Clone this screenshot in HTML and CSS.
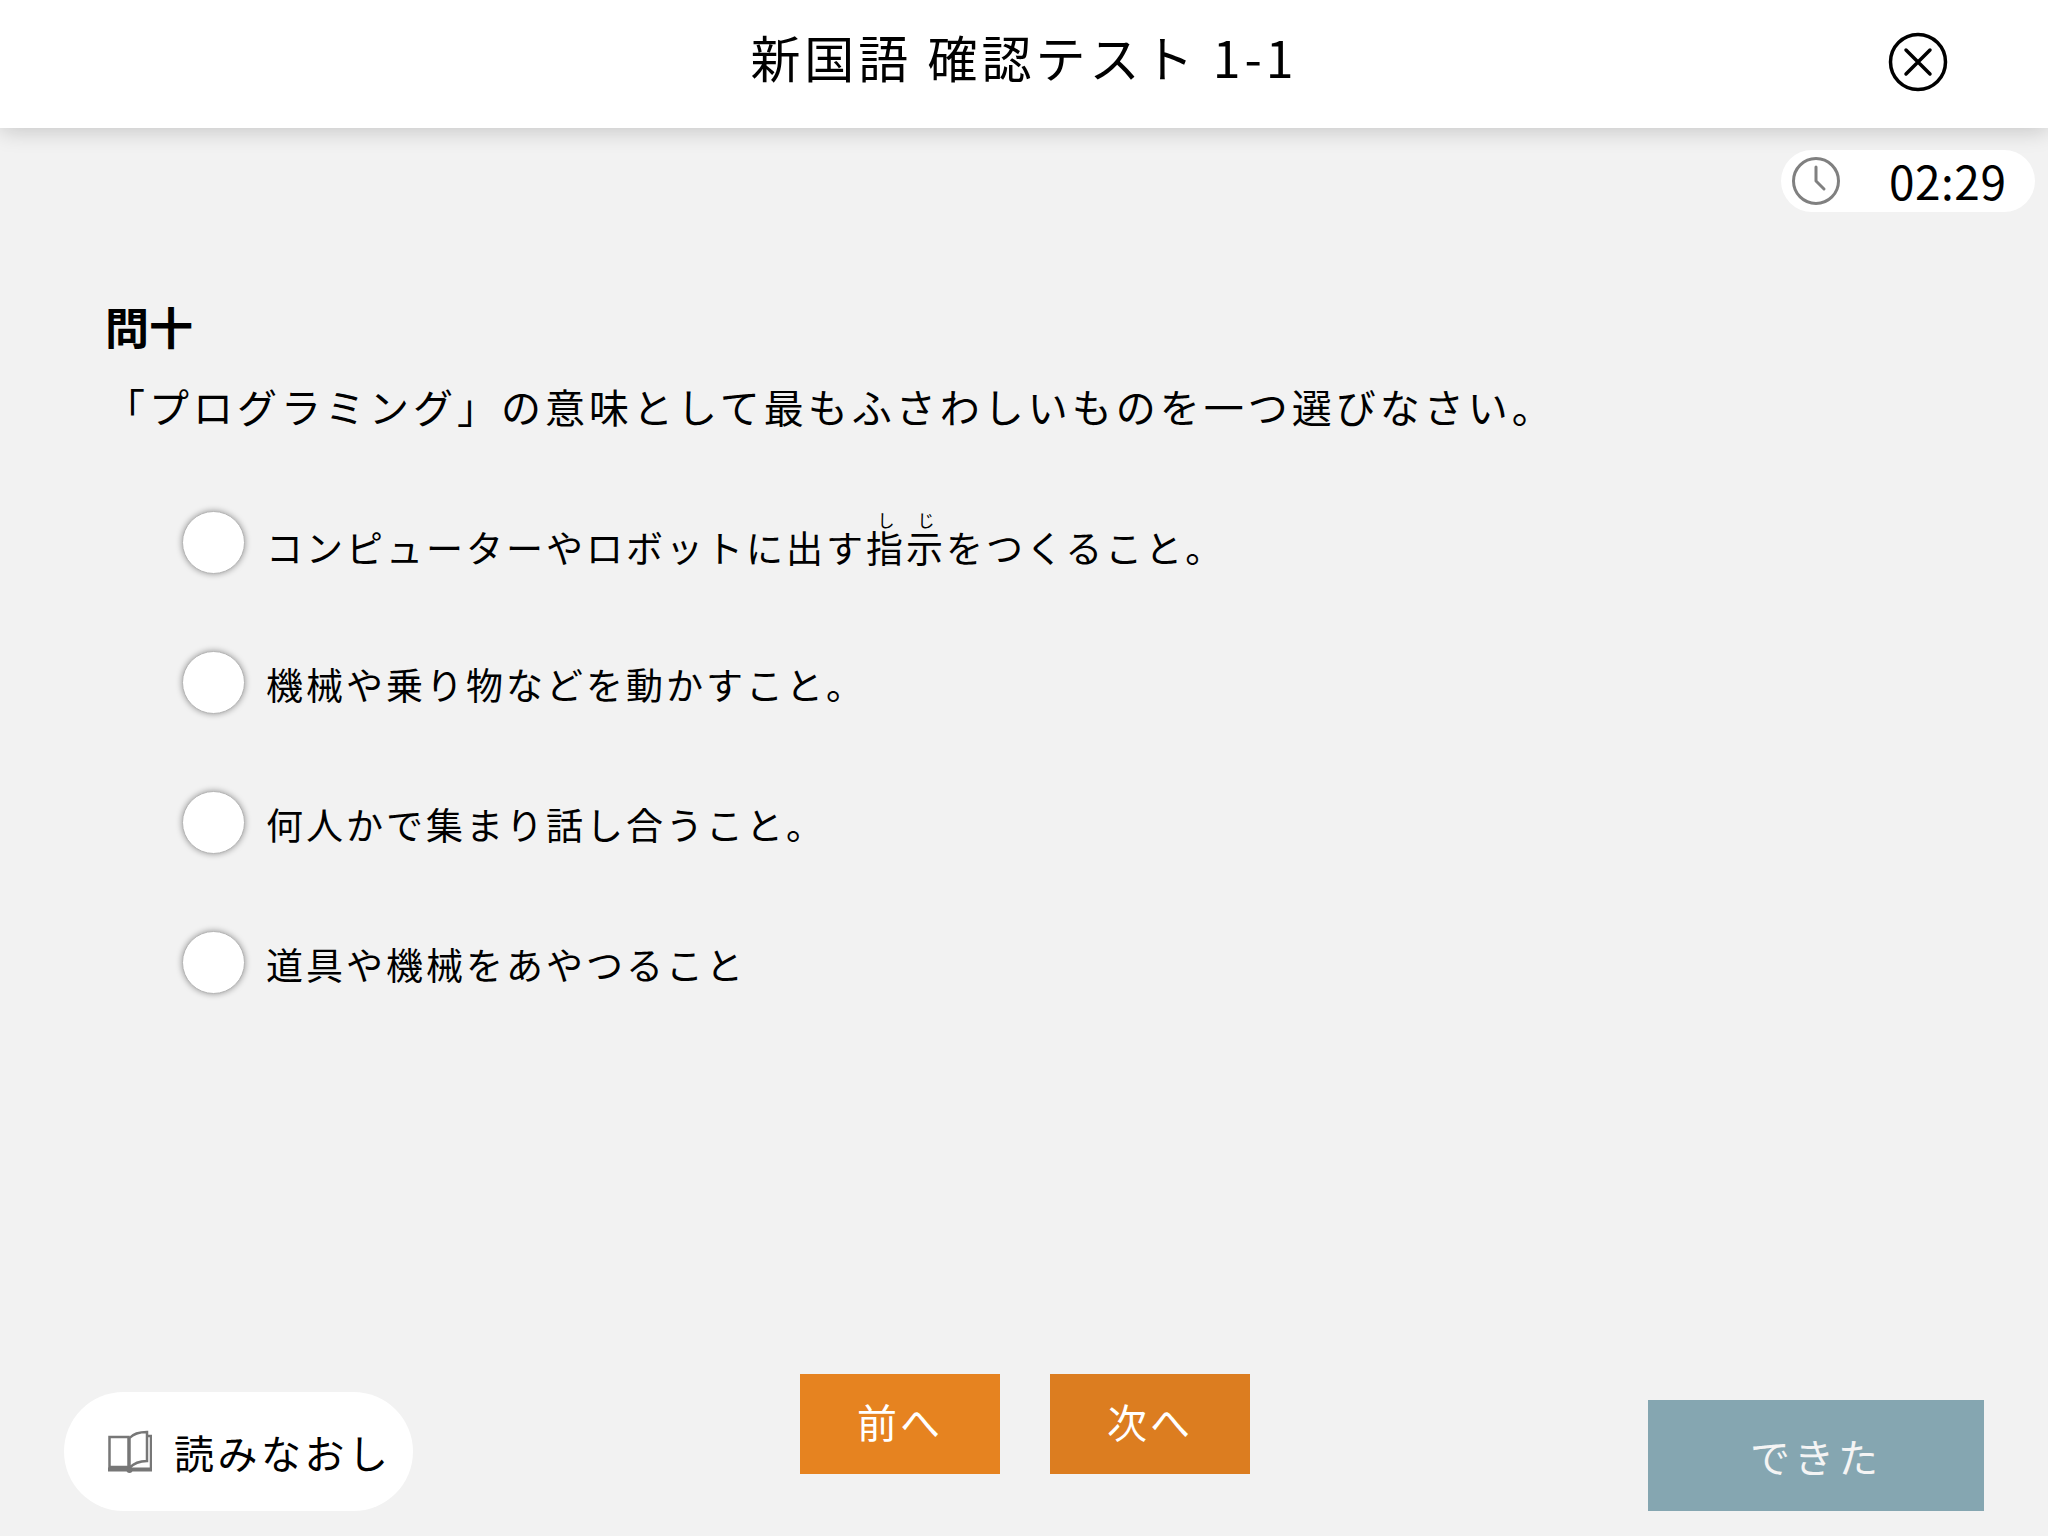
FILE: index.html
```html
<!DOCTYPE html>
<html lang="ja">
<head>
    <meta charset="UTF-8">
    <title>新国語 確認テスト 1-1</title>
    <link rel="stylesheet" href="styles.css">
</head>
<body>

<div class="page">
    <!-- Header -->
    <header class="header">
        <h1 class="title">新国語 確認テスト 1-1</h1>
        <button class="btn-close" type="button" aria-label="閉じる">
            <svg width="60" height="60" viewBox="0 0 60 60" fill="none" stroke="#000" stroke-width="3.5">
                <circle cx="30" cy="30" r="27.5"/>
                <path d="M18 18 L42 42 M42 18 L18 42" stroke-linecap="round"/>
            </svg>
        </button>
    </header>

    <!-- Timer -->
    <div class="timer-row">
        <div class="timer">
            <svg width="50" height="50" viewBox="0 0 50 50" fill="none" stroke="#808080" stroke-width="3">
                <circle cx="25" cy="25" r="22.5"/>
                <path d="M25 11 V25 L33 33" stroke-linecap="round" stroke-linejoin="round"/>
            </svg>
            <span class="timer-text">02:29</span>
        </div>
    </div>

    <!-- Question -->
    <main class="question">
        <h2 class="question-no">問十</h2>
        <p class="question-text">「プログラミング」の意味として最もふさわしいものを一つ選びなさい。</p>

        <div class="choices">
            <label class="choice">
                <span class="radio"></span>
                <span class="choice-text choice-ruby">コンピューターやロボットに出す<ruby>指<rt>し</rt></ruby><ruby>示<rt>じ</rt></ruby>をつくること。</span>
            </label>
            <label class="choice">
                <span class="radio"></span>
                <span class="choice-text">機械や乗り物などを動かすこと。</span>
            </label>
            <label class="choice">
                <span class="radio"></span>
                <span class="choice-text">何人かで集まり話し合うこと。</span>
            </label>
            <label class="choice">
                <span class="radio"></span>
                <span class="choice-text">道具や機械をあやつること</span>
            </label>
        </div>
    </main>

    <!-- Footer buttons -->
    <footer class="footer">
        <button class="btn-reread" type="button">
            <svg width="44" height="44" viewBox="0 0 44 44" fill="none" stroke="#777" stroke-width="2.5">
                <path d="M20.5 7 H1.5 V37 H20.5 Z" fill="#fff"/>
                <path d="M21.5 8 C26 3 32 2 39 2 V31 C32 31 26 33 21.5 38 Z" fill="#fff"/>
                <path d="M39 6 H43 V38"/>
                <path d="M0 39.5 H44" stroke-width="4"/>
                <circle cx="21.5" cy="40" r="3" fill="#777" stroke="none"/>
            </svg>
            <span>読みなおし</span>
        </button>
        <div class="nav">
            <button class="btn-nav btn-prev" type="button">前へ</button>
            <button class="btn-nav btn-next" type="button">次へ</button>
        </div>
        <button class="btn-done" type="button">できた</button>
    </footer>
</div>

</body>
</html>
```

FILE: styles.css
```css
/* General Styling */
body {
    margin: 0;
    background-color: #f2f2f2;
    font-family: "Noto Sans CJK JP", "Noto Sans", sans-serif;
    font-weight: 400;
    color: #000;
}

button {
    font-family: inherit;
    font-weight: inherit;
    border: none;
    padding: 0;
    cursor: pointer;
}

.page {
    height: 1536px;
    display: flex;
    flex-direction: column;
    overflow: hidden;
}

/* Header */
.header {
    height: 128px;
    flex-shrink: 0;
    background: white;
    box-shadow: 0 2px 22px rgba(0,0,0,0.2);
    display: grid;
    grid-template-columns: 1fr auto 1fr;
    align-items: center;
}

.title {
    grid-column: 2;
    margin: 0 0 17px;
    font-size: 50px;
    font-weight: 400;
    letter-spacing: 4px;
    line-height: 1.2;
}

.btn-close {
    justify-self: end;
    margin-right: 100px;
    margin-bottom: 4px;
    background: none;
    display: flex;
}

/* Timer */
.timer-row {
    display: flex;
    justify-content: flex-end;
    padding: 22px 13px 0 0;
}

.timer {
    width: 254px;
    height: 62px;
    box-sizing: border-box;
    padding-left: 10px;
    background: white;
    border-radius: 31px;
    display: flex;
    align-items: center;
}

.timer-text {
    margin-left: 48px;
    margin-bottom: 2px;
    font-size: 46px;
    letter-spacing: 0.5px;
    line-height: 1;
}

/* Question */
.question {
    flex: 1;
    padding: 84px 0 0 105px;
}

.question-no {
    margin: 0;
    font-size: 44px;
    font-weight: 700;
    line-height: 60px;
}

.question-text {
    margin: 20px 0 0;
    font-size: 40px;
    letter-spacing: 4px;
    line-height: 60px;
}

.choices {
    margin: 75px 0 0 77px;
    display: flex;
    flex-direction: column;
    gap: 78px;
}

.choice {
    height: 62px;
    display: flex;
    align-items: center;
    gap: 21px;
}

.radio {
    width: 63px;
    height: 63px;
    flex-shrink: 0;
    box-sizing: border-box;
    border: 1px solid #b5b5b5;
    border-radius: 50%;
    background: white;
    box-shadow: 0 0 6px rgba(0,0,0,0.4);
}

.choice-text {
    padding-top: 4px;
    font-size: 37px;
    letter-spacing: 3px;
    line-height: 50px;
}

.choice-ruby {
    padding-top: 10px;
}

.choice-text rt {
    font-size: 17px;
    letter-spacing: 0;
    line-height: 1;
}

/* Footer buttons */
.footer {
    height: 137px;
    padding: 0 64px 25px;
    display: flex;
    align-items: flex-end;
}

.btn-reread {
    width: 349px;
    height: 119px;
    background: white;
    border-radius: 60px;
    color: #000;
    font-size: 40px;
    letter-spacing: 3.5px;
    display: flex;
    align-items: center;
    gap: 22px;
    padding-left: 44px;
    box-sizing: border-box;
}

.nav {
    margin: 0 0 37px 387px;
    display: flex;
    gap: 50px;
}

.btn-nav {
    width: 200px;
    height: 100px;
    padding-bottom: 6px;
    color: white;
    font-size: 40px;
    letter-spacing: 3px;
}

.btn-prev {
    background-color: #e68320;
}

.btn-next {
    background-color: #dc7d20;
}

.btn-done {
    width: 336px;
    height: 111px;
    margin-left: auto;
    background-color: #85a6b1;
    color: #f4f4f4;
    font-size: 40px;
    letter-spacing: 4px;
}
```
